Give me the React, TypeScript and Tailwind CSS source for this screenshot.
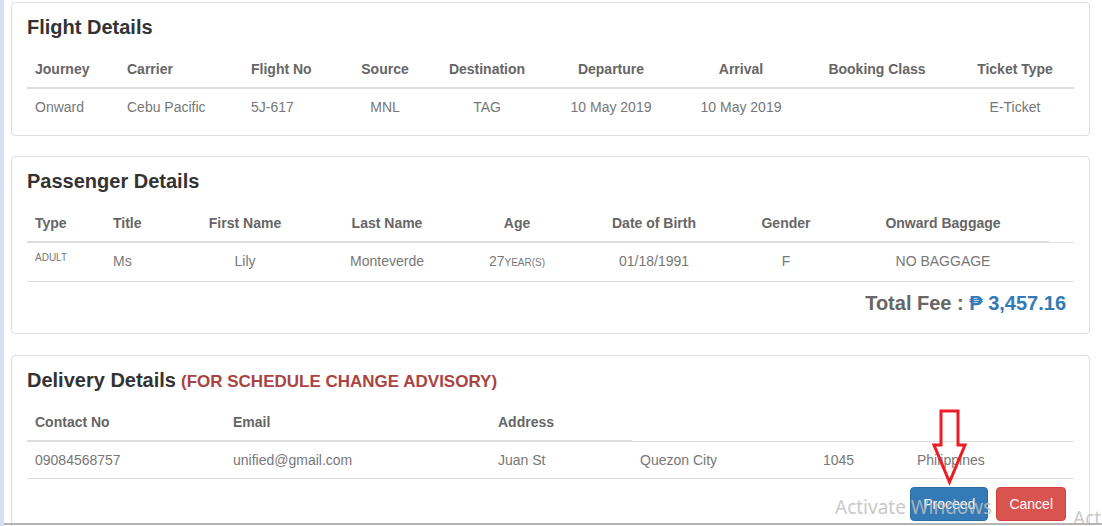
import React from "react";

const th = "px-2 py-2 leading-5 text-[14px] font-bold text-[#666] border-b-2 border-[#ddd] align-bottom";
const td = "px-2 py-2 leading-5 text-[14px] text-[#777] border-t border-[#ddd] align-top";

function Card({ children, className }: { children: React.ReactNode; className?: string }) {
  return (
    <div className={"border border-[#ddd] rounded-[4px] bg-white px-[15px] pt-[13px] " + (className || "")}>
      {children}
    </div>
  );
}

export default function App() {
  return (
    <div className="relative h-[526px] w-[1102px] overflow-hidden bg-white font-['Liberation_Sans',Arial,sans-serif] flex">
      <div className="w-[4px] shrink-0 bg-[#d5dfef]" />
      <div className="flex-1 pl-[7px] pr-[12px] pt-[2px]">
        {/* Flight Details */}
        <Card className="mb-5 pb-[10px]">
          <h4 className="text-[20px] leading-[22px] font-bold text-[#333] mb-[13px]">Flight Details</h4>
          <table className="w-full table-fixed border-collapse">
            <colgroup>
              <col className="w-[92px]" />
              <col className="w-[124px]" />
              <col className="w-[91px]" />
              <col className="w-[102px]" />
              <col className="w-[102px]" />
              <col className="w-[146px]" />
              <col className="w-[114px]" />
              <col className="w-[158px]" />
              <col className="w-[118px]" />
            </colgroup>
            <thead>
              <tr>
                <th className={th + " text-left"}>Journey</th>
                <th className={th + " text-left"}>Carrier</th>
                <th className={th + " text-left"}>Flight No</th>
                <th className={th + " text-center"}>Source</th>
                <th className={th + " text-center"}>Destination</th>
                <th className={th + " text-center"}>Departure</th>
                <th className={th + " text-center"}>Arrival</th>
                <th className={th + " text-center"}>Booking Class</th>
                <th className={th + " text-center"}>Ticket Type</th>
              </tr>
            </thead>
            <tbody>
              <tr>
                <td className={td + " text-left"}>Onward</td>
                <td className={td + " text-left"}>Cebu Pacific</td>
                <td className={td + " text-left"}>5J-617</td>
                <td className={td + " text-center"}>MNL</td>
                <td className={td + " text-center"}>TAG</td>
                <td className={td + " text-center"}>10 May 2019</td>
                <td className={td + " text-center"}>10 May 2019</td>
                <td className={td + " text-center"}></td>
                <td className={td + " text-center"}>E-Ticket</td>
              </tr>
            </tbody>
          </table>
        </Card>

        {/* Passenger Details */}
        <Card className="mb-[21px] pb-[19px]">
          <h4 className="text-[20px] leading-[22px] font-bold text-[#333] mb-[13px]">Passenger Details</h4>
          <table className="w-full table-fixed border-collapse">
            <colgroup>
              <col className="w-[78px]" />
              <col className="w-[72px]" />
              <col className="w-[136px]" />
              <col className="w-[148px]" />
              <col className="w-[112px]" />
              <col className="w-[162px]" />
              <col className="w-[102px]" />
              <col className="w-[212px]" />
              <col className="w-[25px]" />
            </colgroup>
            <thead>
              <tr>
                <th className={th + " text-left"}>Type</th>
                <th className={th + " text-left"}>Title</th>
                <th className={th + " text-center"}>First Name</th>
                <th className={th + " text-center"}>Last Name</th>
                <th className={th + " text-center"}>Age</th>
                <th className={th + " text-center"}>Date of Birth</th>
                <th className={th + " text-center"}>Gender</th>
                <th className={th + " text-center"}>Onward Baggage</th>
                <th className="p-0"></th>
              </tr>
            </thead>
            <tbody>
              <tr>
                <td className={td + " border-b text-left"}>
                  <span className="block text-[10px] leading-[11px] pt-[1px]">ADULT</span>
                </td>
                <td className={td + " border-b text-left"}>Ms</td>
                <td className={td + " border-b text-center"}>Lily</td>
                <td className={td + " border-b text-center"}>Monteverde</td>
                <td className={td + " border-b text-center"}>
                  27<span className="text-[10px]">YEAR(S)</span>
                </td>
                <td className={td + " border-b text-center"}>01/18/1991</td>
                <td className={td + " border-b text-center"}>F</td>
                <td className={td + " border-b text-center"}>NO BAGGAGE</td>
                <td className={td + " border-b"}></td>
              </tr>
            </tbody>
          </table>
          <div className="mt-[10px] pr-2 text-right text-[20px] leading-[22px] font-bold">
            <span className="text-[#666]">Total Fee : </span>
            <span className="text-[#337ab7]">₱ 3,457.16</span>
          </div>
        </Card>

        {/* Delivery Details */}
        <Card className="pb-[20px]">
          <h4 className="flex items-baseline gap-[5px] h-[22px] text-[20px] leading-[22px] font-bold text-[#333] mb-[13px]">
            <span>Delivery Details</span>
            <span className="text-[17px] leading-[22px] text-[#a94442]">(FOR SCHEDULE CHANGE ADVISORY)</span>
          </h4>
          <table className="w-full table-fixed border-collapse">
            <colgroup>
              <col className="w-[198px]" />
              <col className="w-[265px]" />
              <col className="w-[142px]" />
              <col className="w-[183px]" />
              <col className="w-[94px]" />
              <col className="w-[165px]" />
            </colgroup>
            <thead>
              <tr>
                <th className={th + " text-left"}>Contact No</th>
                <th className={th + " text-left"}>Email</th>
                <th className={th + " text-left"}>Address</th>
                <th className="p-0"></th>
                <th className="p-0"></th>
                <th className="p-0"></th>
              </tr>
            </thead>
            <tbody>
              <tr>
                <td className={td + " border-b text-left"}>09084568757</td>
                <td className={td + " border-b text-left"}>unified@gmail.com</td>
                <td className={td + " border-b text-left"}>Juan St</td>
                <td className={td + " border-b text-left"}>Quezon City</td>
                <td className={td + " border-b text-left"}>1045</td>
                <td className={td + " border-b text-left"}>Philippines</td>
              </tr>
            </tbody>
          </table>
          <div className="mt-[8px] pr-2 flex justify-end gap-2">
            <button className="h-[34px] px-3 rounded-[4px] border border-[#2e6da4] bg-[#337ab7] text-white text-[14px] leading-5">
              Proceed
            </button>
            <button className="h-[34px] px-3 rounded-[4px] border border-[#d43f3a] bg-[#d9534f] text-white text-[14px] leading-5">
              Cancel
            </button>
          </div>
        </Card>
      </div>

      {/* Red annotation arrow */}
      <svg
        className="absolute left-[928px] top-[406px] w-[44px] h-[80px] pointer-events-none"
        viewBox="928 406 44 80"
      >
        <polygon
          points="941,411 958,411 958,445 965,445 949.5,482 934,445 941,445"
          fill="none"
          stroke="#ed1c24"
          strokeWidth="3"
          strokeLinejoin="miter"
        />
      </svg>

      {/* Windows activation watermark */}
      <div className="absolute left-[835px] top-[494px] text-[19px] leading-[26px] font-['Noto_Sans',sans-serif] text-[rgba(190,190,190,0.85)] whitespace-nowrap pointer-events-none">
        Activate Windows
      </div>
      <div className="absolute left-[1073px] top-[505px] text-[19px] leading-[26px] font-['Noto_Sans',sans-serif] text-[rgba(190,190,190,0.85)] whitespace-nowrap pointer-events-none">
        Act
      </div>
      <div className="absolute left-[4px] right-0 top-[523px] h-[2px] bg-[#b4b4b4]" />
      <div className="absolute left-[835px] top-[523px] text-[13px] leading-[16px] font-['Noto_Sans',sans-serif] text-[rgba(190,190,190,0.7)] whitespace-nowrap pointer-events-none">
        Go to Settings to activate Windows.
      </div>
    </div>
  );
}
